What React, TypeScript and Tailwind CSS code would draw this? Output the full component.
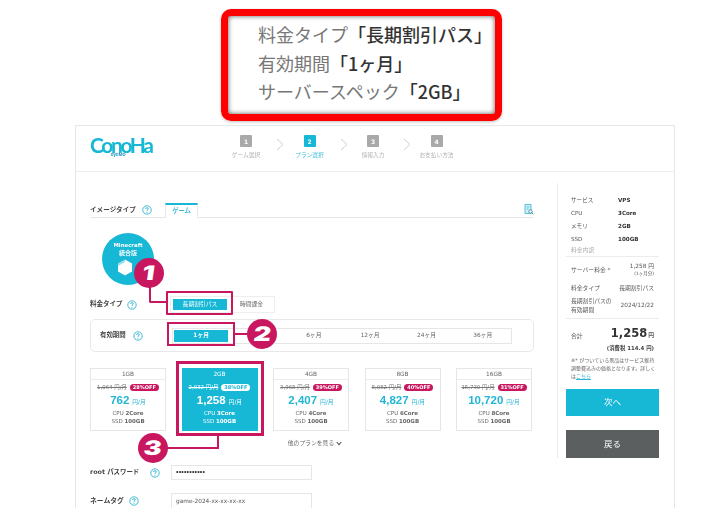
import React from "react";

const jp = { fontFamily: '"Noto Sans CJK JP", "Noto Sans", sans-serif' };
const page = { fontFamily: '"DejaVu Sans", "Noto Sans CJK JP", sans-serif' };

function Help({ className = "" }: { className?: string }) {
  return (
    <svg width="10" height="10" viewBox="0 0 10 10" className={`shrink-0 ${className}`}>
      <circle cx="5" cy="5" r="4.2" fill="none" stroke="#2fb4d4" strokeWidth="0.9" />
      <path d="M3.6 4 Q3.7 2.7 5 2.7 Q6.4 2.8 6.3 3.9 Q6.2 4.6 5 5.2 L5 5.9" fill="none" stroke="#2fb4d4" strokeWidth="0.9" />
      <circle cx="5" cy="7.2" r="0.55" fill="#2fb4d4" />
    </svg>
  );
}

function Step({ n, label, active }: { n: number; label: string; active?: boolean }) {
  return (
    <div className="flex w-[46px] flex-col items-center">
      <div className={`flex h-3 w-3 items-center justify-center rounded-[1px] text-[6px] font-bold text-white ${active ? "bg-[#17b7d6]" : "bg-[#a9a9a9]"}`}>
        {n}
      </div>
      <div className={`mt-[4px] whitespace-nowrap text-[5.7px] leading-[9px] ${active ? "text-[#3dbcd9]" : "text-[#b0b0b0]"}`}>{label}</div>
    </div>
  );
}

function Chevron() {
  return (
    <svg width="8" height="13" viewBox="0 0 8 13" className="mb-[7px] ml-[7px] mr-[2.5px] shrink-0">
      <path d="M1 1 L7 6.5 L1 12" fill="none" stroke="#cfcfcf" strokeWidth="1" />
    </svg>
  );
}

type Plan = { gb: string; old: string; off: string; price: string; cpu: string; active?: boolean };
const plans: Plan[] = [
  { gb: "1GB", old: "1,064 円/月", off: "28%OFF", price: "762", cpu: "2Core" },
  { gb: "2GB", old: "2,032 円/月", off: "38%OFF", price: "1,258", cpu: "3Core", active: true },
  { gb: "4GB", old: "3,968 円/月", off: "39%OFF", price: "2,407", cpu: "4Core" },
  { gb: "8GB", old: "8,082 円/月", off: "40%OFF", price: "4,827", cpu: "6Core" },
  { gb: "16GB", old: "15,730 円/月", off: "31%OFF", price: "10,720", cpu: "8Core" },
];

function PlanCard({ p }: { p: Plan }) {
  const a = p.active;
  return (
    <div className={`flex h-[63px] flex-col items-center border ${a ? "border-[#17b7d6] bg-[#17b7d6] text-white" : "border-[#e6e6e6] bg-white text-[#666]"}`}>
      <div className={`h-[11px] w-full border-b text-center text-[5.8px] leading-[10px] ${a ? "border-[#17b7d6]" : "border-[#ececec]"}`}>{p.gb}</div>
      <div className="mt-[3px] flex h-[9px] items-center gap-[3px] whitespace-nowrap">
        <span className={`text-[5.4px] line-through ${a ? "text-white" : "text-[#777]"}`}>{p.old}</span>
        <span className={`rounded-full px-[3px] text-[5px] font-bold leading-[7.5px] ${a ? "bg-white text-[#17b7d6]" : "bg-[#c8175f] text-white"}`}>{p.off}</span>
      </div>
      <div className={`mt-[1px] flex h-[14px] items-baseline gap-[3px] whitespace-nowrap ${a ? "text-white" : "text-[#22b5d4]"}`}>
        <span className="text-[11.5px] font-bold leading-[14px]" style={{ fontFamily: '"Liberation Sans", sans-serif' }}>{p.price}</span>
        <span className="text-[5.8px]">円/月</span>
      </div>
      <div className="mt-[2px] text-[5.5px] leading-[8px]">CPU <b>{p.cpu}</b></div>
      <div className="text-[5.5px] leading-[8px]">SSD <b>100GB</b></div>
    </div>
  );
}

function SideRow({ k, v }: { k: string; v: string }) {
  return (
    <div className="flex h-[13px] items-center px-[5px] text-[5.6px] text-[#555]">
      <span className="w-[47px]">{k}</span>
      <b className="text-[#333]">{v}</b>
    </div>
  );
}

function Badge({ n, className }: { n: string; className: string }) {
  return (
    <div className={`absolute flex h-[30px] w-[30px] items-center justify-center rounded-full bg-[#c8175f] text-white ${className}`} style={{ fontFamily: "Inter, sans-serif" }}>
      <span className="-skew-x-6 scale-x-[1.35] text-[20px] font-black leading-none">{n}</span>
    </div>
  );
}

export default function App() {
  return (
    <div className="relative h-[508px] w-[722px] overflow-hidden bg-white" style={jp}>
      {/* callout */}
      <div className="ml-[221px] mt-[9px] h-[112px] w-[281px] rounded-[10px] border-[7px] border-[#ff0000] pl-[30px] pt-[4px] text-[18px] leading-[28.7px] text-[#777] shadow-[inset_0_0_5px_rgba(0,0,0,0.65),0_1px_3px_rgba(0,0,0,0.25)]">
        <div className="whitespace-nowrap">料金タイプ<b className="font-medium text-[#333]">「長期割引パス」</b></div>
        <div className="whitespace-nowrap">有効期間<b className="font-medium text-[#333]">「1ヶ月」</b></div>
        <div className="whitespace-nowrap">サーバースペック<b className="font-medium text-[#333]">「2GB」</b></div>
      </div>

      {/* page */}
      <div className="ml-[75px] mt-[4px] h-[400px] w-[600px] border border-b-0 border-[#e6e6e6] blur-[0.4px]" style={page}>
        <div className="flex h-[46px] items-start border-b border-[#eeeeee]">
          <div className="relative ml-[14px] mt-[9px] w-[60px]">
            <div className="whitespace-nowrap text-[21px] font-bold leading-[20px] tracking-[-2.4px] text-[#17b7d6]" style={{ fontFamily: "Lato, sans-serif" }}>ConoHa</div>
            <div className="absolute left-[20px] top-[18px] px-[1px] text-[4px] font-bold leading-[4px] text-[#1b8fc0]" style={{ fontFamily: "Inter, sans-serif" }}>byGMO</div>
          </div>
          <div className="ml-[73px] mt-[9px] flex items-center">
            <Step n={1} label="ゲーム選択" />
            <Chevron />
            <Step n={2} label="プラン選択" active />
            <Chevron />
            <Step n={3} label="情報入力" />
            <Chevron />
            <Step n={4} label="お支払い方法" />
          </div>
        </div>

        <div className="flex text-[#444]">
          <div className="w-[481px] pl-[14px] pr-[23px] pt-[31px]">
            <div className="flex h-[15px] items-end border-b border-[#e6e6e6]">
              <span className="mb-[2px] w-[46px] whitespace-nowrap text-[6.6px] font-bold leading-[10px] text-[#444]">イメージタイプ</span>
              <Help className="mb-[2px] ml-[6px]" />
              <div className="relative top-[1px] ml-[13px] flex h-[15px] w-[33px] items-center justify-center border-x border-b border-t-2 border-[#e6e6e6] border-b-white border-t-[#17b7d6] text-[6.3px] font-bold text-[#3dbcd9]">ゲーム</div>
              <svg width="10" height="11" viewBox="0 0 10 11" className="mb-[2px] ml-auto">
                <path d="M1 .5H7V9.5H1Z" fill="#d5f0f6" stroke="#2fb4d4" strokeWidth="0.8" />
                <path d="M2.5 3H5.5M2.5 5H4.5" stroke="#2fb4d4" strokeWidth="0.7" />
                <circle cx="6.5" cy="7.5" r="1.7" fill="#fff" stroke="#2a7f95" strokeWidth="0.8" />
                <path d="M7.7 8.7L9.3 10.3" stroke="#2a7f95" strokeWidth="0.9" />
              </svg>
            </div>

            <div className="ml-[12px] mt-[15px] flex h-[52px] w-[52px] flex-col items-center rounded-full bg-[#17b7d6] pt-[8px] font-bold leading-[8px] text-white">
              <span className="text-[5.4px]">Minecraft</span>
              <span className="text-[6px]">統合版</span>
              <svg width="16" height="17" viewBox="0 0 16 17" className="-ml-[6px] mt-[2px]">
                <path d="M8 .5L15 4.5V12.5L8 16.5L1 12.5V4.5Z" fill="#fff" />
                <path d="M8 .5L1 4.5V7L8 3Z" fill="#17b7d6" opacity="0.45" />
              </svg>
            </div>

            <div className="mt-[11px] flex h-[17px] items-center">
              <span className="w-[37px] text-[6.5px] font-bold">料金タイプ</span>
              <Help />
              <div className="ml-[33px] flex h-[17px] w-[105px] border border-[#eeeeee]">
                <div className="m-[2px] flex w-[54px] items-center justify-center bg-[#17b7d6] text-[5.8px] text-white">長期割引パス</div>
                <div className="flex flex-1 items-center justify-center text-[5.8px] text-[#666]">時間課金</div>
              </div>
            </div>

            <div className="mt-[6px] flex h-[33px] items-center rounded-[5px] border border-[#e8e8e8] pl-[9px] pr-[21px]">
              <span className="w-[33px] text-[6.4px] font-bold">有効期間</span>
              <Help />
              <div className="ml-[29px] grid h-[16px] flex-1 grid-cols-6 border border-[#e6e6e6] text-[5.8px] text-[#666]">
                <div className="m-[1px] flex items-center justify-center bg-[#17b7d6] font-bold text-white">1ヶ月</div>
                <div />
                <div className="flex items-center justify-center">6ヶ月</div>
                <div className="flex items-center justify-center">12ヶ月</div>
                <div className="flex items-center justify-center">24ヶ月</div>
                <div className="flex items-center justify-center">36ヶ月</div>
              </div>
            </div>

            <div className="mr-[2px] mt-[16px] grid grid-cols-5 gap-[15.5px]">
              {plans.map((p) => (
                <PlanCard key={p.gb} p={p} />
              ))}
            </div>

            <div className="mt-[7px] flex h-[10px] items-center justify-center gap-[2px] pl-[6px] text-[5.8px] text-[#666]">
              他のプランを見る
              <svg width="6" height="5" viewBox="0 0 6 5"><path d="M.7 1L3 3.6 5.3 1" fill="none" stroke="#555" strokeWidth="1.1" /></svg>
            </div>

            <div className="mt-[17px] flex h-[15px] items-center">
              <span className="w-[60px] whitespace-nowrap text-[6.4px] font-bold">root パスワード</span>
              <Help />
              <div className="ml-[11px] flex h-[15px] w-[141px] items-center border border-[#e6e6e6] pl-[4px] text-[7px] font-bold tracking-[0.2px] text-[#333]" style={{ fontFamily: '"Liberation Sans", sans-serif' }}>•••••••••••</div>
            </div>

            <div className="mt-[13px] flex h-[16px] items-center">
              <span className="w-[39px] text-[6.8px] font-bold">ネームタグ</span>
              <Help />
              <div className="ml-[32px] flex h-[16px] w-[141px] items-center border border-[#e6e6e6] pl-[4px] text-[5.8px] text-[#555]">game-2024-xx-xx-xx-xx</div>
            </div>
          </div>

          <div className="mt-[11px] h-[275px] w-[103px] border-l border-[#ececec] pl-[8px] pt-[11px]">
            <div className="w-[93px]">
              <SideRow k="サービス" v="VPS" />
              <SideRow k="CPU" v="3Core" />
              <SideRow k="メモリ" v="2GB" />
              <SideRow k="SSD" v="100GB" />
              <div className="h-[11px] border-b border-[#ececec] px-[5px] text-[5.8px] leading-[9px] text-[#aaa]">料金内訳</div>
              <div className="mt-[4px] flex h-[18px] items-center justify-between px-[5px] text-[5.8px] text-[#555]">
                <span>サーバー料金 *</span>
                <div className="text-right leading-[8px]">
                  <div>1,258 円</div>
                  <div className="text-[4.5px]">(1ヶ月分)</div>
                </div>
              </div>
              <div className="mt-[4px] flex h-[10px] items-center justify-between px-[5px] text-[5.8px] text-[#555]">
                <span>料金タイプ</span>
                <span>長期割引パス</span>
              </div>
              <div className="mt-[3px] flex h-[19px] items-center justify-between px-[5px] text-[5.8px] leading-[9px] text-[#555]">
                <span className="w-[46px]">長期割引パスの有効期間</span>
                <span>2024/12/22</span>
              </div>
              <div className="mt-[3px] flex h-[24px] items-end justify-between border-t border-[#ececec] px-[5px] text-[5.8px] text-[#555]">
                <span className="mb-[1px]">合計</span>
                <div className="flex items-baseline">
                  <b className="text-[11.5px] leading-[18px] text-[#333]">1,258</b>
                  <b className="ml-[1px] text-[5.8px]">円</b>
                </div>
              </div>
              <div className="mt-[1px] px-[5px] text-right text-[5.4px] font-bold leading-[10px] text-[#444]">(消費税 114.4 円)</div>
              <div className="mt-[3px] pl-[5px] text-[5px] leading-[8px] text-[#666]">
                ※* がついている景品はサービス維持調整費込みの価格となります。詳しくは<span className="text-[#2fb4d4] underline">こちら</span>
              </div>
              <div className="mt-[9px] flex h-[27px] items-center justify-center bg-[#17b7d6] text-[8.5px] text-white">次へ</div>
              <div className="mt-[14px] flex h-[28px] items-center justify-center bg-[#5b5f60] text-[8.5px] text-white">戻る</div>
            </div>
          </div>
        </div>
      </div>

      {/* annotations */}
      <div className="absolute left-[166px] top-[291px] h-[24px] w-[67px] rounded-[1px] border-2 border-[#c8175f]" />
      <div className="absolute left-[149px] top-[285px] h-[18px] w-[18px] rounded-bl-[2px] border-b-2 border-l-2 border-[#c8175f]" />
      <Badge n="1" className="left-[134px] top-[258px]" />
      <div className="absolute left-[167px] top-[322px] h-[24px] w-[68px] border-2 border-[#c8175f]" />
      <div className="absolute left-[235px] top-[333px] h-[2px] w-[14px] bg-[#c8175f]" />
      <Badge n="2" className="left-[247px] top-[319px]" />
      <div className="absolute left-[176px] top-[361px] h-[75px] w-[88px] border-[3px] border-[#c8175f]" />
      <div className="absolute left-[165px] top-[435px] h-[14px] w-[54px] border-b-2 border-r-2 border-[#c8175f]" />
      <Badge n="3" className="left-[138px] top-[433px]" />
    </div>
  );
}
